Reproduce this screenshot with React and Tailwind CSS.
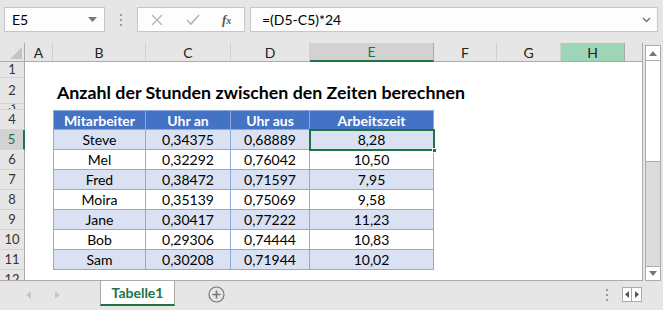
import React from 'react';

const cols = [
  { id: 'A', w: 28 },
  { id: 'B', w: 93 },
  { id: 'C', w: 85 },
  { id: 'D', w: 79 },
  { id: 'E', w: 124 },
  { id: 'F', w: 63 },
  { id: 'G', w: 64 },
  { id: 'H', w: 64 },
];

const data = [
  ['Steve', '0,34375', '0,68889', '8,28'],
  ['Mel', '0,32292', '0,76042', '10,50'],
  ['Fred', '0,38472', '0,71597', '7,95'],
  ['Moira', '0,35139', '0,75069', '9,58'],
  ['Jane', '0,30417', '0,77222', '11,23'],
  ['Bob', '0,29306', '0,74444', '10,83'],
  ['Sam', '0,30208', '0,71944', '10,02'],
];

const font = { fontFamily: 'Lato, "Open Sans", sans-serif' };

const RowHead = ({ n, h, active }) => (
  <div
    className={`w-[25px] shrink-0 flex items-center justify-center overflow-hidden border-b border-[#d4d4d4] text-[13px] ${
      active
        ? 'bg-[#d2d2d2] text-[#217346] border-r-2 border-r-[#217346]'
        : 'bg-[#e6e6e6] text-[#333] border-r border-r-[#ababab]'
    }`}
    style={{ height: h }}
  >
    {n}
  </div>
);

const tableWidths = [93, 85, 79, 124];

const TableRow = ({ cells, header, odd, first }) => (
  <div className="flex">
    <div className="w-[28px] shrink-0" />
    {cells.map((c, i) => (
      <div
        key={i}
        className={`shrink-0 h-[20px] flex items-center justify-center text-[14px] border-b border-r border-[#8ea9db] ${
          i === 0 ? 'border-l' : ''
        } ${first ? 'border-t' : ''} ${
          header
            ? 'bg-[#4472c4] text-white font-bold'
            : odd
            ? 'bg-[#d9e1f2] text-black'
            : 'bg-white text-black'
        }`}
        style={{ width: tableWidths[i] }}
      >
        {c}
      </div>
    ))}
  </div>
);

export default function App() {
  return (
    <div className="w-[663px] h-[310px] bg-[#e6e6e6] overflow-hidden flex flex-col" style={font}>
      {/* formula bar */}
      <div className="h-[43px] shrink-0 flex items-start pt-[7px]">
        <div className="ml-[4px] w-[101px] h-[25px] bg-[#fdfdfd] border border-[#c6c6c6] flex items-center justify-between pl-[7px] pr-[7px] text-[14px] text-black">
          <span>E5</span>
          <svg width="9" height="6" viewBox="0 0 9 6">
            <path d="M0 0h9L4.5 5z" fill="#777" />
          </svg>
        </div>
        <div className="w-[32px] h-[25px] flex flex-col items-center justify-center gap-[3px]">
          <span className="w-[2px] h-[2px] bg-[#9a9a9a]" />
          <span className="w-[2px] h-[2px] bg-[#9a9a9a]" />
          <span className="w-[2px] h-[2px] bg-[#9a9a9a]" />
        </div>
        <div className="w-[108px] h-[25px] bg-[#fdfdfd] border border-[#c6c6c6] flex items-center">
          <svg className="ml-[13px]" width="12" height="12" viewBox="0 0 12 12">
            <path d="M1 1l10 10M11 1L1 11" stroke="#b4b4b4" strokeWidth="1.4" />
          </svg>
          <svg className="ml-[23px]" width="14" height="12" viewBox="0 0 14 12">
            <path d="M1 6l4 4 8-9" stroke="#b4b4b4" strokeWidth="1.6" fill="none" />
          </svg>
          <span
            className="ml-[22px] text-[13px] italic font-bold text-[#555]"
            style={{ fontFamily: '"Liberation Serif", serif' }}
          >
            f<span className="text-[10px]">x</span>
          </span>
        </div>
        <div className="ml-[5px] w-[408px] h-[25px] bg-[#fdfdfd] border border-[#c6c6c6] flex items-center justify-between pl-[11px] pr-[6px] text-[14px] text-black">
          <span>=(D5-C5)*24</span>
          <svg width="9" height="6" viewBox="0 0 9 6">
            <path d="M1 1l3.5 3.5L8 1" stroke="#777" strokeWidth="1.5" fill="none" />
          </svg>
        </div>
      </div>

      {/* sheet */}
      <div className="h-[238px] shrink-0 flex">
        <div className="w-[643px] shrink-0 flex flex-col border-r border-b border-[#ababab] bg-white">
          {/* column headers */}
          <div className="h-[19px] shrink-0 flex bg-[#e6e6e6]">
            <div className="w-[25px] shrink-0 border-r border-b border-[#ababab] flex items-end justify-end p-[2px]">
              <svg width="12" height="12" viewBox="0 0 12 12">
                <path d="M12 0v12H0z" fill="#c4c4c4" />
              </svg>
            </div>
            {cols.map((c) => (
              <div
                key={c.id}
                className={`shrink-0 flex items-center justify-center text-[14px] border-r ${
                  c.id === 'E'
                    ? 'bg-[#d2d2d2] text-[#217346] border-b-2 border-b-[#217346] border-r-[#ababab]'
                    : c.id === 'H'
                    ? 'bg-[#9fd5b7] text-[#222] border-b border-[#ababab]'
                    : 'text-[#222] border-b border-[#ababab] border-r-[#d0d0d0]'
                }`}
                style={{ width: c.w }}
              >
                {c.id}
              </div>
            ))}
            <div className="flex-1 border-b border-[#ababab]" />
          </div>

          {/* rows */}
          <div className="flex-1 flex overflow-hidden">
            <div className="flex flex-col">
              <RowHead n="1" h={16} />
              <RowHead n="2" h={26} />
              <RowHead n="3" h={6} />
              <RowHead n="4" h={20} />
              {data.map((_, i) => (
                <RowHead key={i} n={String(i + 5)} h={20} active={i === 0} />
              ))}
              <div className="w-[25px] h-[11px] overflow-hidden bg-[#e6e6e6] border-r border-[#ababab] flex justify-center text-[13px] text-[#333] leading-[18px]">
                12
              </div>
            </div>
            <div className="flex-1 flex flex-col relative">
              <div className="h-[16px]" />
              <div className="h-[26px] flex items-end pb-[2px]">
                <div className="ml-[32px] text-[17.8px] font-bold text-black leading-none">
                  Anzahl der Stunden zwischen den Zeiten berechnen
                </div>
              </div>
              <div className="h-[6px]" />
              <TableRow cells={['Mitarbeiter', 'Uhr an', 'Uhr aus', 'Arbeitszeit']} header first />
              {data.map((r, i) => (
                <TableRow key={i} cells={r} odd={i % 2 === 0} />
              ))}
              {/* selected cell E5 */}
              <div className="absolute left-[284px] top-[67px] w-[126px] h-[22px] border-2 border-[#217346] pointer-events-none">
                <div className="absolute right-[-4px] bottom-[-4px] w-[5px] h-[5px] bg-[#217346] border border-white" />
              </div>
            </div>
          </div>
        </div>

        {/* vertical scrollbar */}
        <div className="flex-1 flex justify-center pt-[2px]">
          <div className="w-[16px] h-[236px] flex flex-col border border-[#ababab] bg-[#dcdcdc]">
            <div className="h-[15px] bg-white border-b border-[#ababab] flex items-center justify-center">
              <svg width="8" height="5" viewBox="0 0 8 5">
                <path d="M0 5h8L4 0z" fill="#777" />
              </svg>
            </div>
            <div className="h-[101px] bg-white border-b border-[#ababab]" />
            <div className="flex-1" />
            <div className="h-[14px] bg-white border-t border-[#ababab] flex items-center justify-center">
              <svg width="8" height="5" viewBox="0 0 8 5">
                <path d="M0 0h8L4 5z" fill="#777" />
              </svg>
            </div>
          </div>
        </div>
      </div>

      {/* sheet tabs */}
      <div className="flex-1 flex items-start">
        <div className="w-[100px] h-[27px] flex items-center">
          <svg className="ml-[26px]" width="5" height="8" viewBox="0 0 5 8">
            <path d="M5 0v8L0 4z" fill="#c6c6c6" />
          </svg>
          <svg className="ml-[24px]" width="5" height="8" viewBox="0 0 5 8">
            <path d="M0 0v8l5-4z" fill="#c6c6c6" />
          </svg>
        </div>
        <div className="w-[75px] h-[25px] bg-white border-x border-[#ababab] border-b-2 border-b-[#217346] flex items-center justify-center text-[14px] font-bold text-[#217346]">
          Tabelle1
        </div>
        <div className="ml-[33px] h-[27px] flex items-center">
          <svg width="17" height="17" viewBox="0 0 17 17">
            <circle cx="8.5" cy="8.5" r="7.5" fill="none" stroke="#777" strokeWidth="1.2" />
            <path d="M8.5 4.5v8M4.5 8.5h8" stroke="#777" strokeWidth="1.6" />
          </svg>
        </div>
        <div className="ml-auto h-[27px] flex items-center mr-[21px]">
          <div className="flex flex-col gap-[3px] mr-[14px]">
            <span className="w-[2px] h-[2px] bg-[#9a9a9a]" />
            <span className="w-[2px] h-[2px] bg-[#9a9a9a]" />
            <span className="w-[2px] h-[2px] bg-[#9a9a9a]" />
          </div>
          <div className="flex h-[15px] border border-[#ababab] bg-white">
            <div className="w-[9px] flex items-center justify-center border-r border-[#ababab]">
              <svg width="4" height="7" viewBox="0 0 4 7">
                <path d="M4 0v7L0 3.5z" fill="#555" />
              </svg>
            </div>
            <div className="w-[9px] flex items-center justify-center">
              <svg width="4" height="7" viewBox="0 0 4 7">
                <path d="M0 0v7l4-3.5z" fill="#555" />
              </svg>
            </div>
          </div>
        </div>
      </div>
    </div>
  );
}
